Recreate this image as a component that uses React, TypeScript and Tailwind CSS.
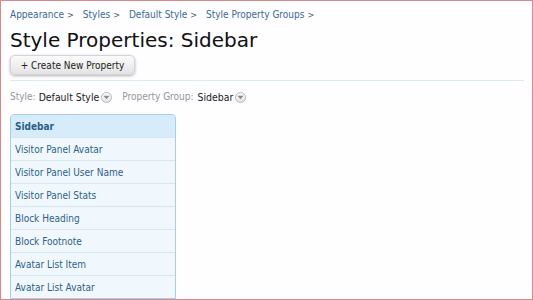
const crumbs = ['Appearance', 'Styles', 'Default Style', 'Style Property Groups']

const items = [
  'Visitor Panel Avatar',
  'Visitor Panel User Name',
  'Visitor Panel Stats',
  'Block Heading',
  'Block Footnote',
  'Avatar List Item',
  'Avatar List Avatar',
]

const small = "font-['DejaVu_Sans_Condensed','DejaVu_Sans',sans-serif] text-[10px]"

// little round "pick" button shown after filter values
function DropCircle() {
  return (
    <span className="ml-[2px] inline-flex h-[11px] w-[11px] items-center justify-center rounded-full border border-[#b8b8b8] bg-gradient-to-b from-white to-[#e2e2e2]">
      <svg width="7" height="5" viewBox="0 0 7 5">
        <path d="M0.5 0.8 L6.5 0.8 L3.5 4.3 Z" fill="#8a8a8a" />
      </svg>
    </span>
  )
}

export default function App() {
  return (
    <div className="h-[300px] w-[533px] overflow-hidden border border-[#d98787] bg-[#fefdff] pl-[9px] pr-[8px]">
      <nav className={`${small} mt-[8px] flex gap-[9px] leading-[12px] text-[#3b6a92]`}>
        {crumbs.map(c => (
          <span key={c}>
            {c}
            <span className="ml-[3px] text-[9px] text-[#555]">&gt;</span>
          </span>
        ))}
      </nav>

      <h1 className="mt-[7px] font-['DejaVu_Sans',sans-serif] text-[20px] leading-[24px] text-[#111]">
        Style Properties: Sidebar
      </h1>

      <button
        className={`${small} mt-[3px] flex h-[20px] w-[125px] items-center justify-center rounded-[5px] border border-[#d4d4d4] bg-gradient-to-b from-[#fbfbfb] to-[#e4e4e4] text-[#222] shadow-[0_1px_3px_rgba(0,0,0,0.3)]`}
      >
        + Create New Property
      </button>

      <div className="mt-[5px] h-px bg-[#d9ecef]" />

      <div className={`${small} mt-[9px] flex items-center leading-[14px]`}>
        <span className="text-[#979797]">Style:</span>
        <span className="ml-[3px] text-[10.4px] text-[#1a1a1a]">Default Style</span>
        <DropCircle />
        <span className="ml-[10px] text-[#979797]">Property Group:</span>
        <span className="ml-[4px] text-[10.4px] text-[#1a1a1a]">Sidebar</span>
        <DropCircle />
      </div>

      <div className={`${small} mt-[10px] w-[166px] overflow-hidden rounded-t-[4px] border border-[#a9cde6] text-[10.3px] text-[#2d5f86]`}>
        <div className="flex h-[22px] items-center bg-[#d6ecfa] pl-[4px] font-bold">Sidebar</div>
        {items.map(i => (
          <div key={i} className="flex h-[23px] items-center border-t border-[#d8e6f0] bg-[#f1f8fd] pl-[4px]">
            {i}
          </div>
        ))}
      </div>
    </div>
  )
}
